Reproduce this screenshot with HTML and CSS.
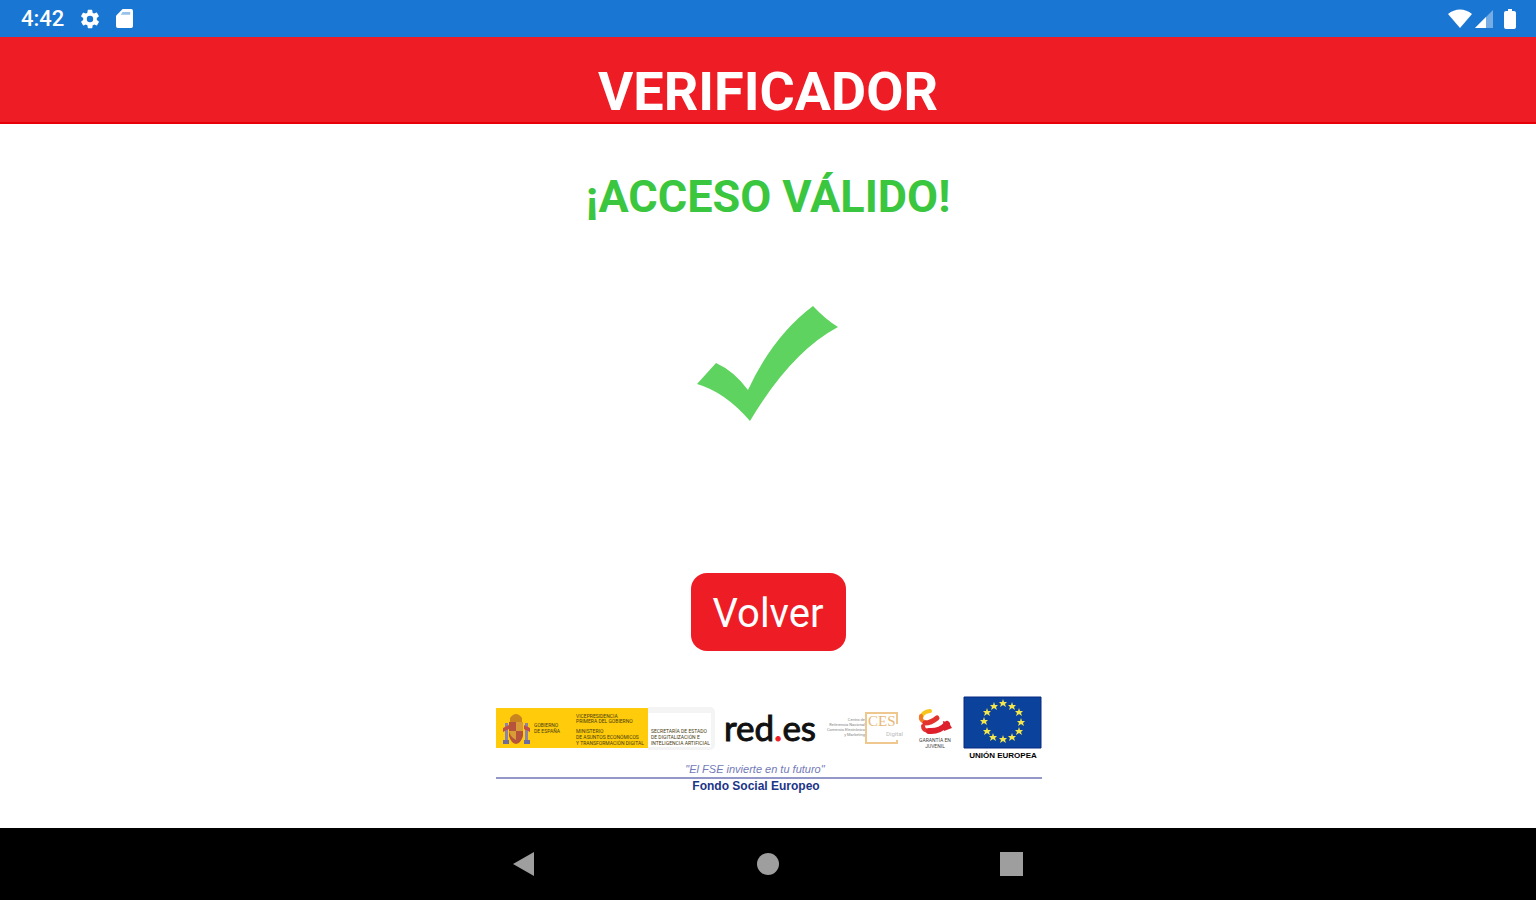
FILE: index.html
```
<!DOCTYPE html>
<html lang="es">
<head>
  <title>Verificador</title>
  <meta charset="utf-8">
  <meta name="viewport" content="width=device-width, initial-scale=1">
  <link rel="stylesheet" href="styles.css">
</head>
<body>
  <div class="status-bar">
    <div class="status-group">
      <span class="clock">4:42</span>
      <svg class="gear" width="22" height="22" viewBox="0 0 24 24" aria-hidden="true">
        <path fill="#fff" fill-rule="evenodd" d="M19.4 13a7.500 7.500 0 0 0 0-2l2.100-1.650a.5.5 0 0 0 .12-.64l-2-3.460a.5.5 0 0 0-.6-.22l-2.500 1a7.300 7.300 0 0 0-1.700-.98l-.38-2.650A.5.5 0 0 0 14 2h-4a.5.5 0 0 0-.5.42l-.38 2.650c-.6.25-1.170.58-1.700.98l-2.500-1a.5.5 0 0 0-.6.22l-2 3.460a.5.5 0 0 0 .12.64L4.600 11a7.500 7.500 0 0 0 0 2l-2.100 1.650a.5.5 0 0 0-.12.64l2 3.460c.12.22.38.3.6.22l2.500-1c.53.4 1.100.73 1.700.98l.38 2.650c.04.24.25.4.5.4h4c.25 0 .46-.16.5-.4l.38-2.650c.6-.25 1.170-.58 1.700-.98l2.500 1c.22.08.48 0 .6-.22l2-3.460a.5.5 0 0 0-.12-.64zM12 15.500a3.500 3.500 0 1 1 0-7 3.500 3.500 0 0 1 0 7z"/>
      </svg>
      <svg width="17" height="19" viewBox="0 0 18 20" aria-hidden="true">
        <path fill="#fff" d="M7 0h9a2 2 0 0 1 2 2v16a2 2 0 0 1-2 2H2a2 2 0 0 1-2-2V7z"/>
        <path fill="#1976d2" opacity=".45" d="M7 3h8v3H5z"/>
      </svg>
    </div>
    <div class="status-group status-icons">
      <svg width="24" height="20" viewBox="0 0 24 20" aria-hidden="true">
        <path fill="#fff" d="M0 5C7-1 17-1 24 5L12 19z"/>
      </svg>
      <svg width="18" height="20" viewBox="0 0 18 20" aria-hidden="true">
        <path fill="#fff" opacity=".4" d="M18 1v18H0z"/>
        <path fill="#fff" d="M11 8v11H0z"/>
      </svg>
      <svg class="battery" width="12" height="20" viewBox="0 0 12 20" aria-hidden="true">
        <path fill="#fff" d="M4 0h4v2h2a2 2 0 0 1 2 2v14a2 2 0 0 1-2 2H2a2 2 0 0 1-2-2V4a2 2 0 0 1 2-2h2z"/>
      </svg>
    </div>
  </div>

  <header class="app-bar">
    <h1>VERIFICADOR</h1>
  </header>

  <main>
    <h2>¡ACCESO VÁLIDO!</h2>
    <svg class="check" width="142" height="116" viewBox="0 0 142 116" role="img" aria-label="Válido">
      <path fill="#5fd35f" d="M0 78L19 57Q37 65 51 84Q76 30 116 0Q128 13 141 21Q94 46 53 115Q28 86 0 78z"/>
    </svg>
    <button type="button" class="back-button">Volver</button>

    <!-- Sponsor strip -->
    <svg class="sponsors" width="548" height="100" viewBox="0 0 548 100" role="img" aria-label="Gobierno de España, red.es, Unión Europea, Fondo Social Europeo">
      <path fill="#f4f4f4" d="M154 13h62a5 5 0 0 1 5 5v33a5 5 0 0 1-5 5h-62z"/>
      <path fill="#fff" d="M154 19h63v34h-63z"/>
      <path fill="#ffcb0b" d="M2 14h152v40H2z"/>

      <!-- coat of arms -->
      <g>
        <path fill="#c8841e" d="M16 24q6-8 12 0v4H16z"/>
        <path fill="#b5533c" d="M15 28h14v14q-2 7-7 8q-5-1-7-8z"/>
        <path fill="#d99b35" d="M22 28h7v9h-7zM15 37h7v9q-6-3-7-9z"/>
        <path fill="#8c84a8" d="M11 29h3v18h-3zM31 29h3v18h-3z"/>
        <path fill="#c0504a" d="M9 34l6-3v4l-6 3zM30 31l6 3v4l-6-3z"/>
        <path fill="#6d6b9c" d="M9 46h6v4H9zM30 46h6v4h-6z"/>
      </g>

      <g class="tiny tiny-dark">
        <text x="40" y="33">GOBIERNO</text>
        <text x="40" y="39">DE ESPAÑA</text>
        <text x="82" y="24">VICEPRESIDENCIA</text>
        <text x="82" y="29">PRIMERA DEL GOBIERNO</text>
        <text x="82" y="39">MINISTERIO</text>
        <text x="82" y="45">DE ASUNTOS ECONÓMICOS</text>
        <text x="82" y="51">Y TRANSFORMACIÓN DIGITAL</text>
        <text x="157" y="39">SECRETARÍA DE ESTADO</text>
        <text x="157" y="45">DE DIGITALIZACIÓN E</text>
        <text x="157" y="51">INTELIGENCIA ARTIFICIAL</text>
      </g>

      <text class="redes" x="230" y="47">red<tspan class="redes-dot">.</tspan>es</text>

      <g class="tiny tiny-gray">
        <text x="371" y="27">Centro de</text>
        <text x="371" y="32">Referencia Nacional</text>
        <text x="371" y="37">Comercio Electrónico</text>
        <text x="371" y="42">y Marketing</text>
      </g>
      <path fill="none" stroke="#efc88f" stroke-width="2" d="M403 30v-11h-31v30h31v-3"/>
      <text class="ces" x="374" y="32">CES</text>
      <text class="tiny-light" x="392" y="42">Digital</text>

      <!-- red and yellow ribbon -->
      <g fill="none" stroke-linecap="round">
        <path stroke="#f8c51c" stroke-width="4" d="M428 22q1-4 8-5"/>
        <path stroke="#f07a28" stroke-width="4" d="M427 22q-1 5 4 6"/>
        <path stroke="#e2332e" stroke-width="5" d="M431 29q6 0 12-5"/>
        <path stroke="#e2332e" stroke-width="4" d="M429 32q0 4 5 5"/>
        <path stroke="#de202c" stroke-width="6" d="M435 37q10 1 18-7"/>
      </g>
      <path fill="#de202c" d="M449 27l6 2l3 5l-8 3z"/>
      <g class="tiny tiny-ribbon">
        <text x="441" y="48">GARANTÍA EN</text>
        <text x="441" y="54">JUVENIL</text>
      </g>

      <path fill="#0b439c" stroke="#062a80" d="M470 3h77v51h-77z"/>
      <g fill="#f2e64c">
        <path id="star" d="M509 5l1 3h3l-2 2 1 3-3-2-3 2 1-3-2-2h3z"/>
        <use href="#star" x="9" y="3"/>
        <use href="#star" x="16" y="9"/>
        <use href="#star" x="18" y="19"/>
        <use href="#star" x="16" y="28"/>
        <use href="#star" x="9" y="34"/>
        <use href="#star" x="0" y="36"/>
        <use href="#star" x="-10" y="34"/>
        <use href="#star" x="-16" y="28"/>
        <use href="#star" x="-19" y="18"/>
        <use href="#star" x="-16" y="9"/>
        <use href="#star" x="-9" y="3"/>
      </g>
      <text class="union" x="509" y="64">UNIÓN EUROPEA</text>

      <text class="motto" x="261" y="79">"El FSE invierte en tu futuro"</text>
      <path fill="#9498c8" d="M2 83h546v2H2z"/>
      <text class="fund" x="262" y="96">Fondo Social Europeo</text>
    </svg>
  </main>

  <nav class="nav-bar">
    <button type="button" aria-label="Atrás">
      <svg width="24" height="26" viewBox="0 0 24 26"><path fill="#9e9e9e" d="M22 1v24L1 13z"/></svg>
    </button>
    <button type="button" aria-label="Inicio">
      <svg width="24" height="26" viewBox="0 0 24 26"><circle cx="12" cy="13" r="11" fill="#9e9e9e"/></svg>
    </button>
    <button type="button" aria-label="Recientes">
      <svg width="24" height="26" viewBox="0 0 24 26"><path fill="#9e9e9e" d="M0 1h23v24H0z"/></svg>
    </button>
  </nav>
</body>
</html>
```
FILE: styles.css
```
* {
  box-sizing: border-box;
}

body {
  display: flex;
  flex-direction: column;
  min-height: 100vh;
  margin: 0;
  background-color: #fff;
  font-family: Roboto, sans-serif;
}

button {
  border: 0;
  font-family: inherit;
  cursor: pointer;
}

.status-bar {
  display: flex;
  justify-content: space-between;
  align-items: center;
  height: 37px;
  padding: 0 20px 0 21px;
  background-color: #1976d2;
  color: #fff;
}

.status-group {
  display: flex;
  align-items: center;
  gap: 15px;
}

.status-icons {
  gap: 3px;
}

.clock {
  font-size: 22px;
  font-weight: 500;
}

.battery {
  margin-left: 8px;
}

.app-bar {
  height: 87px;
  padding-top: 23px;
  background-color: #ee1c25;
  border-bottom: 2px solid #e80008;
  color: #fff;
  text-align: center;
}

h1 {
  margin: 0;
  font-size: 54px;
  line-height: 64px;
  font-weight: 700;
}

main {
  display: flex;
  flex: 1;
  flex-direction: column;
  align-items: center;
  padding-top: 45px;
}

h2 {
  margin: 0;
  color: #3ac63f;
  font-size: 45px;
  line-height: 56px;
  font-weight: 700;
}

.check {
  margin-top: 81px;
}

.back-button {
  margin-top: 151px;
  padding: 2px 22px 0;
  height: 78px;
  border-radius: 16px;
  background-color: #ee1c25;
  color: #fff;
  font-size: 40px;
}

.sponsors {
  margin-top: 43px;
}

.tiny {
  font-family: Roboto, sans-serif;
  font-size: 5px;
}

.tiny-dark {
  fill: #4a3c10;
}

.tiny-gray {
  fill: #888;
  font-size: 4px;
  text-anchor: end;
}

.tiny-light {
  fill: #bbb;
  font-size: 6px;
}

.tiny-ribbon {
  fill: #444;
  text-anchor: middle;
}

.redes {
  font-family: Lato, sans-serif;
  font-size: 35px;
  fill: #111;
  stroke: #111;
}

.redes-dot {
  fill: #ee1c25;
  stroke: #ee1c25;
}

.ces {
  font-family: "Liberation Serif", serif;
  font-size: 15px;
  fill: #e8b878;
}

.union {
  font-family: "Liberation Sans", sans-serif;
  font-size: 8px;
  font-weight: 700;
  text-anchor: middle;
}

.motto,
.fund {
  font-family: "Liberation Sans", sans-serif;
  font-size: 11px;
  text-anchor: middle;
}

.motto {
  fill: #7279b8;
  font-style: italic;
}

.fund {
  fill: #1c3587;
  font-size: 12px;
  font-weight: 700;
}

.nav-bar {
  display: flex;
  justify-content: center;
  align-items: center;
  gap: 196px;
  height: 72px;
  background-color: #000;
}

.nav-bar button {
  display: flex;
  padding: 12px;
  background: none;
}
```
